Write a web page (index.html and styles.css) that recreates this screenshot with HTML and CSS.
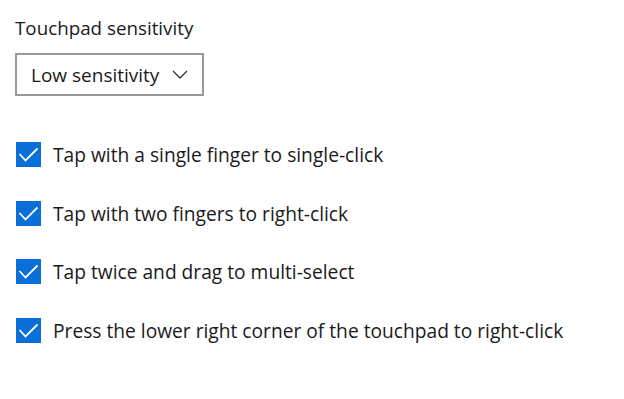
FILE: index.html
```html
<!DOCTYPE html>
<html>
<head>
<meta charset="utf-8">
<link rel="stylesheet" href="styles.css">
</head>
<body>
<div class="page">
  <div class="title">Touchpad sensitivity</div>
  <div class="select">
    <span class="select-text">Low sensitivity</span>
    <svg class="chevron" width="16" height="9" viewBox="0 0 16 9"><path d="M1 1 L8 8 L15 1" fill="none" stroke="#333" stroke-width="1.3"/></svg>
  </div>
  <div class="options">
    <div class="option"><span class="box"><svg width="25" height="25" viewBox="0 0 25 25"><path d="M3.5 12 L9.5 18.5 L21.5 6.5" fill="none" stroke="#fff" stroke-width="1.8"/></svg></span><span class="label">Tap with a single finger to single-click</span></div>
    <div class="option"><span class="box"><svg width="25" height="25" viewBox="0 0 25 25"><path d="M3.5 12 L9.5 18.5 L21.5 6.5" fill="none" stroke="#fff" stroke-width="1.8"/></svg></span><span class="label">Tap with two fingers to right-click</span></div>
    <div class="option"><span class="box"><svg width="25" height="25" viewBox="0 0 25 25"><path d="M3.5 12 L9.5 18.5 L21.5 6.5" fill="none" stroke="#fff" stroke-width="1.8"/></svg></span><span class="label">Tap twice and drag to multi-select</span></div>
    <div class="option"><span class="box"><svg width="25" height="25" viewBox="0 0 25 25"><path d="M3.5 12 L9.5 18.5 L21.5 6.5" fill="none" stroke="#fff" stroke-width="1.8"/></svg></span><span class="label">Press the lower right corner of the touchpad to right-click</span></div>
  </div>
</div>
</body>
</html>
```
FILE: styles.css
```css
html, body {
  margin: 0;
  padding: 0;
  background: #fff;
}
body {
  font-family: "Open Sans", "Noto Sans", sans-serif;
  color: #1a1a1a;
}
.page {
  padding: 16px 0 0 15px;
}
.title {
  font-size: 18.8px;
  line-height: 25px;
}
.select {
  margin-top: 12px;
  width: 185px;
  height: 39px;
  border: 2px solid #999;
  display: flex;
  align-items: center;
  box-sizing: content-box;
}
.select-text {
  font-size: 19px;
  margin-left: 14px;
  flex: 1;
}
.chevron {
  margin-right: 14px;
}
.options {
  margin-top: 46px;
  display: flex;
  flex-direction: column;
  gap: 33.5px;
}
.option {
  display: flex;
  align-items: center;
  height: 25px;
}
.box {
  width: 25px;
  height: 25px;
  background: #0a6fd8;
  display: block;
  margin-left: 1px;
}
.box svg {
  display: block;
}
.label {
  margin-left: 12px;
  font-size: 19.2px;
}
```
